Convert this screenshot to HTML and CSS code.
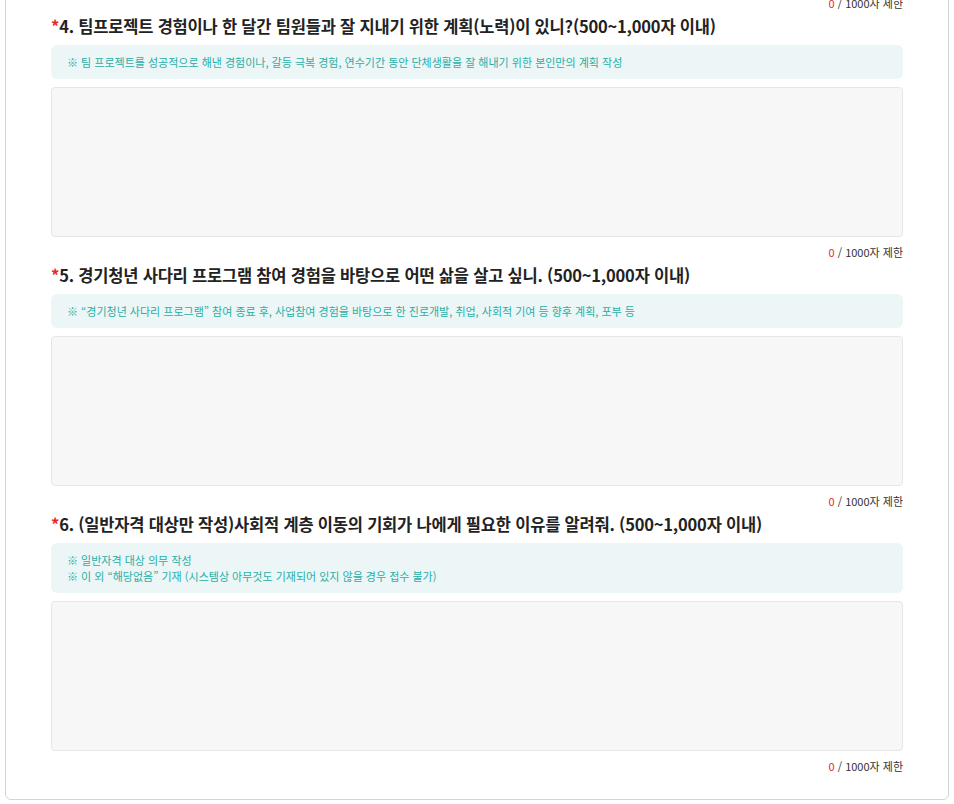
FILE: index.html
```html
<!DOCTYPE html>
<html lang="ko">
<head>
    <meta charset="UTF-8">
    <meta name="viewport" content="width=device-width, initial-scale=1.0">
    <title>자기소개서 작성</title>
    <link rel="stylesheet" href="styles.css">
</head>
<body>
    <div class="form-card">
        <div class="char-count"><span class="current">0</span> / 1000자 제한</div>

        <div class="question">
            <h3 class="question-title"><span class="required">*</span>4. 팀프로젝트 경험이나 한 달간 팀원들과 잘 지내기 위한 계획(노력)이 있니?(500~1,000자 이내)</h3>
            <div class="question-hint">
                <p>※ 팀 프로젝트를 성공적으로 해낸 경험이나, 갈등 극복 경험, 연수기간 동안 단체생활을 잘 해내기 위한 본인만의 계획 작성</p>
            </div>
            <textarea class="answer" name="answer4"></textarea>
            <div class="char-count"><span class="current">0</span> / 1000자 제한</div>
        </div>

        <div class="question">
            <h3 class="question-title"><span class="required">*</span>5. 경기청년 사다리 프로그램 참여 경험을 바탕으로 어떤 삶을 살고 싶니. (500~1,000자 이내)</h3>
            <div class="question-hint">
                <p>※ “경기청년 사다리 프로그램” 참여 종료 후, 사업참여 경험을 바탕으로 한 진로개발, 취업, 사회적 기여 등 향후 계획, 포부 등</p>
            </div>
            <textarea class="answer" name="answer5"></textarea>
            <div class="char-count"><span class="current">0</span> / 1000자 제한</div>
        </div>

        <div class="question">
            <h3 class="question-title"><span class="required">*</span>6. (일반자격 대상만 작성)사회적 계층 이동의 기회가 나에게 필요한 이유를 알려줘. (500~1,000자 이내)</h3>
            <div class="question-hint">
                <p>※ 일반자격 대상 의무 작성</p>
                <p>※ 이 외 “해당없음” 기재 (시스템상 아무것도 기재되어 있지 않을 경우 접수 불가)</p>
            </div>
            <textarea class="answer" name="answer6"></textarea>
            <div class="char-count"><span class="current">0</span> / 1000자 제한</div>
        </div>
    </div>
</body>
</html>
```

FILE: styles.css
```css
:root {
    --text: #222222;
    --text-sub: #333333;
    --red: #e8262b;
    --teal: #26afa6;
    --hint-bg: #edf6f7;
    --field-bg: #f7f7f7;
    --field-border: #e6e6e6;
    --card-border: #d4d4d4;
}

* {
    margin: 0;
    padding: 0;
    box-sizing: border-box;
    font-family: 'Noto Sans CJK KR', 'Noto Sans', sans-serif;
}

body {
    background-color: #ffffff;
    padding: 0 5px;
}

.form-card {
    margin-top: -7px;
    border: 1px solid var(--card-border);
    border-radius: 0 0 6px 6px;
    padding: 0 45px 24px;
}

.question-title {
    margin-top: 2px;
    font-size: 16.5px;
    font-weight: 700;
    line-height: 24px;
    color: var(--text);
    letter-spacing: -0.2px;
}

.required {
    color: var(--red);
}

.question-hint {
    margin-top: 7px;
    padding: 9px 16px;
    background-color: var(--hint-bg);
    border-radius: 6px;
}

.question-hint p {
    font-size: 11px;
    line-height: 16px;
    color: var(--teal);
}

.answer {
    display: block;
    width: 100%;
    height: 150px;
    margin-top: 8px;
    padding: 12px 14px;
    background-color: var(--field-bg);
    border: 1px solid var(--field-border);
    border-radius: 4px;
    resize: none;
    font-size: 14px;
}

.char-count {
    margin-top: 6px;
    text-align: right;
    font-size: 11px;
    line-height: 18px;
    color: var(--text-sub);
}

.char-count .current {
    color: var(--red);
}

.form-card > .char-count {
    margin-top: 0;
}
```
